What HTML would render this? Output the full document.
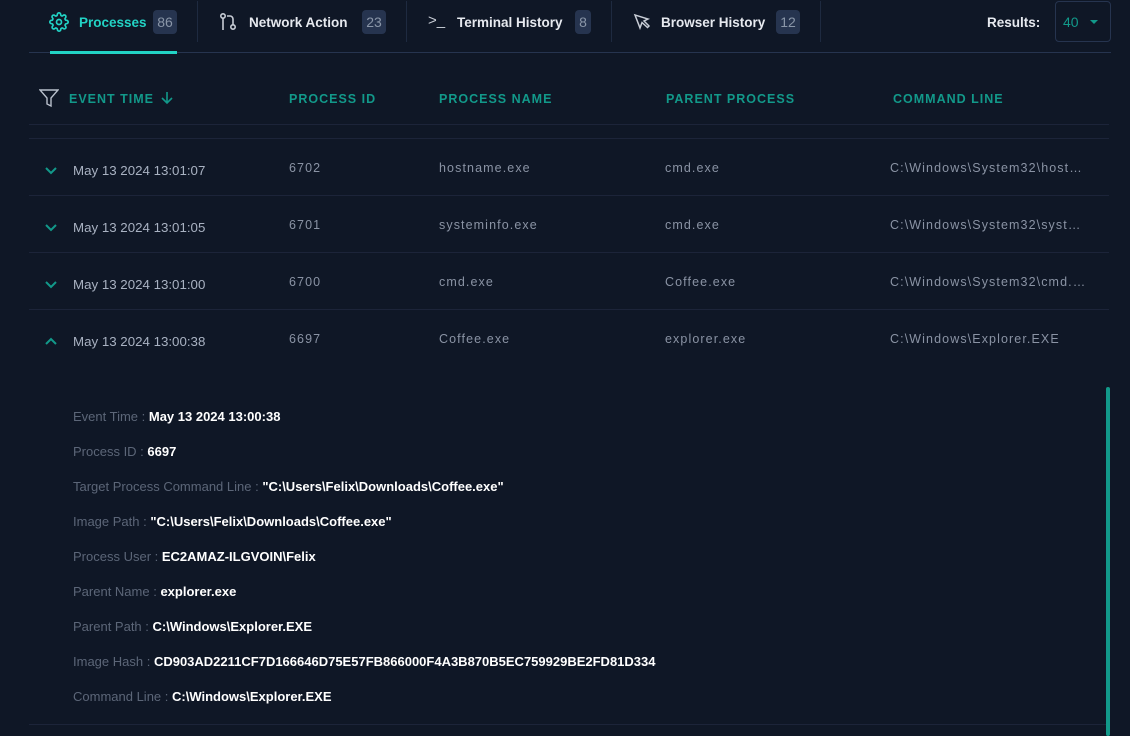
<!DOCTYPE html><html><head><style>
*{margin:0;padding:0;box-sizing:border-box}
body{width:1130px;height:736px;background:#0f1726;font-family:"Liberation Sans",sans-serif;position:relative;overflow:hidden;color:#fff}
.a{position:absolute;white-space:nowrap}
.tab{font-size:13.5px;font-weight:bold;color:#e6e9ef;top:15px}
.badge{position:absolute;top:10px;height:24px;background:#26344f;border-radius:4px;color:#8a96a8;font-size:14px;line-height:24px;text-align:center}
.sep{position:absolute;top:1px;width:1px;height:41px;background:#1e2a40}
.hd{font-size:12.5px;font-weight:bold;color:#12998a;letter-spacing:1px;top:92px}
.line{position:absolute;left:29px;width:1080px;height:1px;background:#1c2439}
.c{font-size:12.5px;color:#8a93a4;letter-spacing:1.1px}
.d{font-size:13.3px;color:#a9b2c2}
.l{font-size:13px;color:#5c6678}
.l b{color:#fff;font-size:13px}
</style></head><body>
<svg class="a" style="left:49px;top:12px" width="20" height="20" viewBox="0 0 24 24" fill="none" stroke="#22d3c5" stroke-width="2"><circle cx="12" cy="12" r="3"/><path d="M19.4 15a1.65 1.65 0 0 0 .33 1.820l.06.06a2 2 0 1 1-2.830 2.830l-.06-.06a1.650 1.650 0 0 0-1.820-.33 1.650 1.650 0 0 0-1 1.510V21a2 2 0 1 1-4 0v-.09A1.650 1.650 0 0 0 9 19.4a1.650 1.650 0 0 0-1.820.33l-.06.06a2 2 0 1 1-2.830-2.830l.06-.06A1.650 1.650 0 0 0 4.680 15a1.650 1.650 0 0 0-1.510-1H3a2 2 0 1 1 0-4h.09A1.650 1.650 0 0 0 4.600 9a1.650 1.650 0 0 0-.33-1.820l-.06-.06a2 2 0 1 1 2.830-2.830l.06.06A1.650 1.650 0 0 0 9 4.680a1.650 1.650 0 0 0 1-1.510V3a2 2 0 1 1 4 0v.09a1.650 1.650 0 0 0 1 1.510 1.650 1.650 0 0 0 1.820-.33l.06-.06a2 2 0 1 1 2.830 2.830l-.06.06A1.650 1.650 0 0 0 19.4 9a1.650 1.650 0 0 0 1.510 1H21a2 2 0 1 1 0 4h-.09a1.650 1.650 0 0 0-1.510 1z"/></svg>
<div class="a tab" style="left:79px;color:#22d3c5">Processes</div>
<div class="badge" style="left:153px;width:24px">86</div>
<div class="sep" style="left:197px"></div>
<svg class="a" style="left:219px;top:12px" width="20" height="20" viewBox="0 0 20 20" fill="none" stroke="#c8cdd6" stroke-width="1.6"><circle cx="4" cy="4" r="2.2"/><path d="M4 6.2V18"/><circle cx="14" cy="15" r="2.2"/><path d="M14 12.8V7a3 3 0 0 0-3-3H8"/></svg>
<div class="a tab" style="left:249px">Network Action</div>
<div class="badge" style="left:362px;width:24px">23</div>
<div class="sep" style="left:406px"></div>
<div class="a" style="left:428px;top:12px;font-size:15px;color:#c8cdd6">&gt;_</div>
<div class="a tab" style="left:457px">Terminal History</div>
<div class="badge" style="left:575px;width:16px">8</div>
<div class="sep" style="left:611px"></div>
<svg class="a" style="left:633px;top:13px" width="18" height="18" viewBox="0 0 18 18" fill="none" stroke="#c8cdd6" stroke-width="1.5"><path d="M2 2l5 13 2-5.5 5.5 5L16 13l-5-5 4-2z"/></svg>
<div class="a tab" style="left:661px">Browser History</div>
<div class="badge" style="left:776px;width:24px">12</div>
<div class="sep" style="left:820px"></div>
<div class="a tab" style="left:987px">Results:</div>
<div class="a" style="left:1055px;top:1px;width:56px;height:41px;border:1px solid #26344f;border-radius:4px"></div>
<div class="a" style="left:1063px;top:14px;font-size:14px;color:#12998a">40</div>
<div class="a" style="left:1090px;top:20px;width:0;height:0;border-left:4px solid transparent;border-right:4px solid transparent;border-top:4px solid #12998a"></div>
<div class="a" style="left:29px;top:52px;width:1082px;height:1px;background:#26344f"></div>
<div class="a" style="left:50px;top:51px;width:127px;height:3px;background:#22d3c5"></div>
<svg class="a" style="left:39px;top:89px" width="20" height="19" viewBox="0 0 20 19" fill="none" stroke="#b9c0cc" stroke-width="1.4"><path d="M1 1h18l-7 8v8l-4-2V9z"/></svg>
<div class="a hd" style="left:69px">EVENT TIME</div>
<svg class="a" style="left:160px;top:91px" width="14" height="14" viewBox="0 0 14 14" fill="none" stroke="#12998a" stroke-width="1.6"><path d="M7 1v11M2 7l5 5 5-5"/></svg>
<div class="a hd" style="left:289px">PROCESS ID</div>
<div class="a hd" style="left:439px">PROCESS NAME</div>
<div class="a hd" style="left:666px">PARENT PROCESS</div>
<div class="a hd" style="left:893px">COMMAND LINE</div>
<div class="line" style="top:124px"></div>
<div class="line" style="top:138px"></div>
<div class="line" style="top:195px"></div>
<div class="line" style="top:252px"></div>
<div class="line" style="top:309px"></div>
<div class="line" style="top:724px"></div>

<svg class="a" style="left:44px;top:166px" width="14" height="10" viewBox="0 0 14 10" fill="none" stroke="#12998a" stroke-width="2"><path d="M2 2l5 5 5-5"/></svg>
<div class="a d" style="left:73px;top:163px">May 13 2024 13:01:07</div>
<div class="a c" style="left:289px;top:161px">6702</div><div class="a c" style="left:439px;top:161px">hostname.exe</div><div class="a c" style="left:665px;top:161px">cmd.exe</div><div class="a c" style="left:890px;top:161px">C:\Windows\System32\host…</div>

<svg class="a" style="left:44px;top:223px" width="14" height="10" viewBox="0 0 14 10" fill="none" stroke="#12998a" stroke-width="2"><path d="M2 2l5 5 5-5"/></svg>
<div class="a d" style="left:73px;top:220px">May 13 2024 13:01:05</div>
<div class="a c" style="left:289px;top:218px">6701</div><div class="a c" style="left:439px;top:218px">systeminfo.exe</div><div class="a c" style="left:665px;top:218px">cmd.exe</div><div class="a c" style="left:890px;top:218px">C:\Windows\System32\syst…</div>

<svg class="a" style="left:44px;top:280px" width="14" height="10" viewBox="0 0 14 10" fill="none" stroke="#12998a" stroke-width="2"><path d="M2 2l5 5 5-5"/></svg>
<div class="a d" style="left:73px;top:277px">May 13 2024 13:01:00</div>
<div class="a c" style="left:289px;top:275px">6700</div><div class="a c" style="left:439px;top:275px">cmd.exe</div><div class="a c" style="left:665px;top:275px">Coffee.exe</div><div class="a c" style="left:890px;top:275px">C:\Windows\System32\cmd.…</div>

<svg class="a" style="left:44px;top:336px" width="14" height="10" viewBox="0 0 14 10" fill="none" stroke="#12998a" stroke-width="2"><path d="M2 8l5-5 5 5"/></svg>
<div class="a d" style="left:73px;top:334px">May 13 2024 13:00:38</div>
<div class="a c" style="left:289px;top:332px">6697</div><div class="a c" style="left:439px;top:332px">Coffee.exe</div><div class="a c" style="left:665px;top:332px">explorer.exe</div><div class="a c" style="left:890px;top:332px">C:\Windows\Explorer.EXE</div>

<div class="a" style="left:1106px;top:387px;width:4px;height:349px;background:#12998a;border-radius:2px"></div>

<div class="a l" style="left:73px;top:409px">Event Time : <b>May 13 2024 13:00:38</b></div>
<div class="a l" style="left:73px;top:444px">Process ID : <b>6697</b></div>
<div class="a l" style="left:73px;top:479px">Target Process Command Line : <b>"C:\Users\Felix\Downloads\Coffee.exe"</b></div>
<div class="a l" style="left:73px;top:514px">Image Path : <b>"C:\Users\Felix\Downloads\Coffee.exe"</b></div>
<div class="a l" style="left:73px;top:549px">Process User : <b>EC2AMAZ-ILGVOIN\Felix</b></div>
<div class="a l" style="left:73px;top:584px">Parent Name : <b>explorer.exe</b></div>
<div class="a l" style="left:73px;top:619px">Parent Path : <b>C:\Windows\Explorer.EXE</b></div>
<div class="a l" style="left:73px;top:654px">Image Hash : <b>CD903AD2211CF7D166646D75E57FB866000F4A3B870B5EC759929BE2FD81D334</b></div>
<div class="a l" style="left:73px;top:689px">Command Line : <b>C:\Windows\Explorer.EXE</b></div>
</body></html>
